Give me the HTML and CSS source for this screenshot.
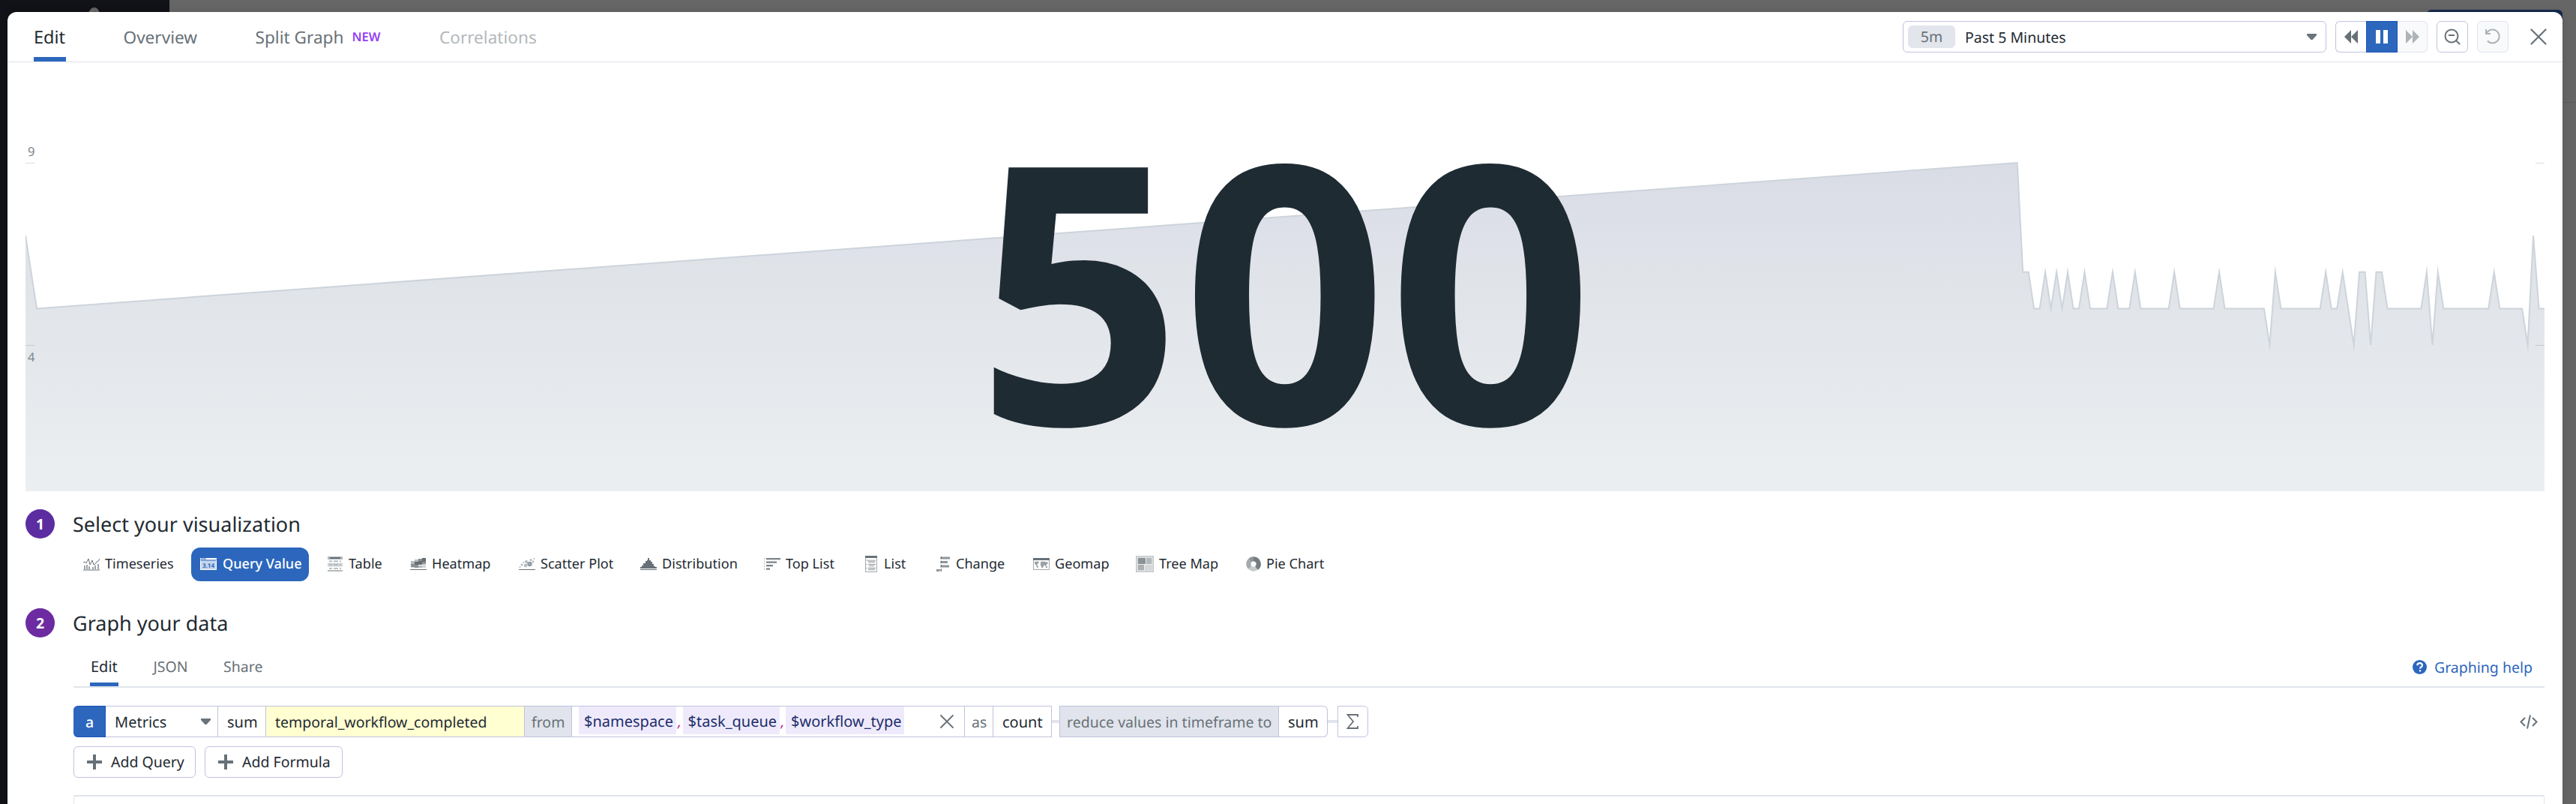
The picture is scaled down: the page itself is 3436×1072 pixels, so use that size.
FILE: index.html
```html
<!DOCTYPE html>
<html lang="en">
<head>
<meta charset="utf-8">
<title>Graph editor</title>
<link rel="stylesheet" href="styles.css">
</head>
<body>
<div class="backdrop">
  <div class="sidebar"><svg class="logo" width="20" height="10" viewBox="0 0 20 10"><path d="M1 10C3 3 6 0 10 0s6 4 8 10h-6l-2-6v6z" fill="#666"/></svg></div>
  <div class="behind"><div class="behind-button"></div><div class="behind-line"></div></div>
</div>
<main class="modal">
  <header class="header">
    <nav class="tabs">
      <a class="tab active">Edit</a>
      <a class="tab overview">Overview</a>
      <a class="tab">Split Graph<span class="new">NEW</span></a>
      <a class="tab disabled">Correlations</a>
    </nav>
    <div class="controls">
      <div class="range"><span class="pill">5m</span><span class="range-text">Past 5 Minutes</span><svg class="caret" width="13" height="8" viewBox="0 0 13 8"><path d="M0 0h13v2L7.500 8h-2L0 2z" fill="#6b747b"/></svg></div>
      <div class="playback">
        <span class="btn rewind"><svg width="18" height="18" viewBox="0 0 18 18" fill="#687178"><path d="M9 0v18L0 9zM18 0v18L9 9z"/></svg></span>
        <span class="btn on"><svg width="16" height="18" viewBox="0 0 16 18" fill="#fff"><path d="M0 0h6v18H0zM10 0h6v18h-6z"/></svg></span>
        <span class="btn off"><svg width="18" height="18" viewBox="0 0 18 18" fill="#adb3b7"><path d="M0 0v18l9-9zM9 0v18l9-9z"/></svg></span>
      </div>
      <span class="square"><svg width="22" height="22" viewBox="0 0 22 22" fill="none" stroke="#687178" stroke-width="2"><circle cx="10" cy="10" r="8.500"/><path d="M6 9h8M16 16l5 5"/></svg></span>
      <span class="square off"><svg width="22" height="22" viewBox="0 0 22 22" fill="none" stroke="#adb3b7" stroke-width="2"><path d="M2 1v6h6M2 7l1.500-2A9 9 0 1 1 4 16.500"/></svg></span>
      <svg class="close" width="22" height="22" viewBox="0 0 22 22" stroke="#687178" stroke-width="2.200" stroke-linecap="round"><path d="M1.500 1.500l19 19M20.500 1.500l-19 19"/></svg>
    </div>
  </header>

  <section class="chart">
    <svg class="plot" width="3360" height="572" viewBox="34 83 3360 572">
      <defs><linearGradient id="area" gradientUnits="userSpaceOnUse" x1="0" y1="217" x2="0" y2="654"><stop offset="0" stop-color="#d9dce5"/><stop offset=".28" stop-color="#dfe2ea"/><stop offset=".3" stop-color="#dfe2e7"/><stop offset="1" stop-color="#ebeff1"/></linearGradient></defs>
      <path id="fill" fill="url(#area)"/>
      <path id="line" fill="none" stroke="#cdd4db" stroke-width="2" stroke-miterlimit="10"/>
      <path d="M34 217.500h12M3382 217.500h12M34 460.500h12M3382 460.500h12" stroke="#000" stroke-opacity=".13"/>
      <text x="37" y="208" class="axis">9</text>
      <text x="37" y="482" class="axis">4</text>
    </svg>
    <div class="value">500</div>
  </section>

  <section class="step">
    <span class="num one">1</span>
    <h2>Select your visualization</h2>
  </section>
  <div class="viz">
    <span class="v"><svg width="22" height="17" viewBox="0 0 22 17"><path d="M0 6l2-1 2 2 3-6 2 8 3-6 2 6 2-1 2-3 2-1 2-3" fill="none" stroke="#687178"/><path d="M0 16h22" stroke="#687178"/><path d="M1 10h2v5H1zM4 9h2v6H4zM7 11h2v4H7zM12 12h2v3h-2zM15 10h2v5h-2zM19 8h2v7h-2z" fill="#9fa5a9"/></svg>Timeseries</span>
    <span class="v sel"><svg width="22" height="16" viewBox="0 0 22 16"><path d="M0 0h22v16H0z" fill="#c5d5ed"/><path d="M0 0h22v2.500H0z" fill="#fff"/><path d="M0 3h22" stroke="#2c67bd"/><path d="M1 1h7" stroke="#2c67bd"/><path d="M.5 3v12.500h21V3" stroke="#fff" fill="none"/><text x="11" y="12.500" text-anchor="middle" class="pi">3.14</text></svg>Query Value</span>
    <span class="v table"><svg width="20" height="20" viewBox="0 0 20 20"><path d="M0 0h20v4H0zM0 18h20v2H0z" fill="#b3b8bb"/><path d="M3 2h14" stroke="#687178" stroke-width="2"/><path d="M0 8.500h20v5H0z" fill="#d3d6d8"/><path d="M2 6.200h4m2 0h6m2 0h2M2 11h4m2 0h6m2 0h2M2 16h4m2 0h6m2 0h2" stroke="#a9afb3" stroke-width="1.400"/></svg>Table</span>
    <span class="v"><svg width="22" height="16" viewBox="0 0 22 16"><path d="M1 4h5v9H1zM16 8h5v5h-5z" fill="#d5d8da"/><path d="M1 4h5v4H1zM6 2h5v4H6zM11 10h5v3h-5z" fill="#b5babd"/><path d="M1 8h5v4H1zM6 9h5v4H6zM16 5h5v3h-5zM11 1h5v3h-5z" fill="#899094"/><path d="M6 5h5v4H6zM11 4h5v5h-5zM16 0h5v5h-5z" fill="#656d73"/><path d="M0 15.500h22" stroke="#687178"/></svg>Heatmap</span>
    <span class="v"><svg width="22" height="16" viewBox="0 0 22 16" fill="#b3b8bb"><circle cx="1.500" cy="12" r="1"/><circle cx="4" cy="9" r="1.500"/><circle cx="6" cy="6" r="1"/><circle cx="9" cy="10" r="2.200"/><circle cx="10" cy="5" r="2"/><circle cx="14.500" cy="8" r="3.300" fill="#999fa4"/><circle cx="16" cy="2.500" r="1.500"/><circle cx="19" cy="5" r="1.400"/><circle cx="20.500" cy="1" r="1"/><path d="M0 15.500h22" stroke="#687178"/></svg>Scatter Plot</span>
    <span class="v"><svg width="22" height="16" viewBox="0 0 22 16"><path d="M0 14v-2h2v-2h2V7h3V4h2V3h1V0h2v3h2v2h2v3h2v3h2v1h2v2z" fill="#687178"/><path d="M0 15.500h22" stroke="#687178"/></svg>Distribution</span>
    <span class="v"><svg width="22" height="16" viewBox="0 0 22 16"><path d="M3 1.200h19M3 5.700h14M3 10.200h9M3 14.700h5" stroke="#7c8489" stroke-width="2.200"/><path d="M.7 0v16" stroke="#9ea4a8" stroke-dasharray="1.500 2"/></svg>Top List</span>
    <span class="v list"><svg width="16" height="22" viewBox="0 0 16 22"><path d="M.5.500h15v21H.5z" fill="#fff" stroke="#a4aaae"/><path d="M0 0h16v3H0z" fill="#687178"/><path d="M3 6.500h11M4 8.500h9M4 16.500h10M4 18.500h9" stroke="#bfc3c5" stroke-width="1.800"/><path d="M4 11.500h10M5 13.500h7" stroke="#8c9398"/><path d="M1.500 6h1M1.500 11.500h1M1.500 16.500h1" stroke="#687178"/></svg>List</span>
    <span class="v"><svg width="19" height="22" viewBox="0 0 19 22"><path d="M5 3h13M5 8.500h10M5 14h12M0 19.500h7" stroke="#8f969a" stroke-width="3"/><path d="M5 1v20" stroke="#fff" stroke-dasharray="2 1"/><path d="M6.500 1v20" stroke="#687178" stroke-dasharray="3 2.500"/></svg>Change</span>
    <span class="v"><svg width="22" height="16" viewBox="0 0 22 16"><path d="M.5.500h21v15H.5z" fill="#fff" stroke="#a4aaae"/><path d="M0 0h22v3H0z" fill="#687178"/><path d="M2 5l5-.5 1 1.500-3 3 2 2-1 3-2-4-2-3zM10 5l3-.5 6 1 1 2-2 1-1 3-2-2-1 1-1 3-2-1-1-3zM17 11h2v2h-2z" fill="#9ba1a5"/></svg>Geomap</span>
    <span class="v"><svg width="24" height="22" viewBox="0 0 24 22"><path d="M0 0h24v22H0z" fill="#c4c8ca"/><path d="M3 3h10v8H3z" fill="#8b9297"/><path d="M14 3h7v8h-7z" fill="#b3b8bb"/><path d="M3 12h8v7H3z" fill="#a9afb2"/><path d="M12 12h9v7h-9z" fill="#d5d7d9"/><path d="M2 11.500h20M13.500 2v9.500M11.500 11.500V20M2 2h20v18H2z" fill="none" stroke="#eceeee"/></svg>Tree Map</span>
    <span class="v"><svg width="20" height="20" viewBox="0 0 20 20" fill="none" stroke-width="6"><circle cx="10" cy="10" r="6.700" stroke="#c7cacc"/><path d="M10 3.300A6.700 6.700 0 0 1 14 15.400" stroke="#757d82"/><path d="M5 14.500A6.700 6.700 0 0 1 5.500 5" stroke="#a4aaae"/><path d="M5.500 5A6.700 6.700 0 0 1 10 3.300" stroke="#8e9599"/></svg>Pie Chart</span>
  </div>

  <section class="step second">
    <span class="num two">2</span>
    <h2>Graph your data</h2>
  </section>
  <div class="data">
    <div class="subtabs">
      <a class="sub active">Edit</a><a class="sub">JSON</a><a class="sub">Share</a>
      <a class="help"><svg width="19" height="19" viewBox="0 0 19 19"><circle cx="9.500" cy="9.500" r="9.500" fill="#2c67bd"/><path d="M6.300 7.200c.2-4 6.700-3.900 6.700-.2 0 2.300-3 2.200-3 4.400M10 13.200v2.300" fill="none" stroke="#fff" stroke-width="2.200"/></svg>Graphing help</a>
    </div>
    <div class="query">
      <span class="cell letter">a</span>
      <span class="cell metrics">Metrics<svg width="13" height="8" viewBox="0 0 13 8"><path d="M0 0h13v2L7.500 8h-2L0 2z" fill="#6b747b"/></svg></span>
      <span class="cell agg">sum</span>
      <span class="cell name">temporal_workflow_completed</span>
      <span class="cell from">from</span>
      <span class="cell scope"><b class="tag ns">$namespace</b><i>,</i><b class="tag tq">$task_queue</b><i>,</i><b class="tag wt">$workflow_type</b><svg width="18" height="18" viewBox="0 0 18 18" stroke="#687178" stroke-width="1.800" stroke-linecap="round"><path d="M1 1l16 16M17 1L1 17"/></svg></span>
      <span class="cell as">as</span>
      <span class="cell count">count</span>
      <span class="link l1"></span>
      <span class="cell reduce">reduce values in timeframe to</span>
      <span class="cell sum2">sum</span>
      <span class="link l2"></span>
      <span class="cell sigma"><svg width="16" height="20" viewBox="0 0 16 20" fill="none" stroke="#687178" stroke-width="1.800"><path d="M15 4V1H1.500L9 10 1.500 19H15v-3"/></svg></span>
      <svg class="code" width="24" height="19" viewBox="0 0 24 19" fill="none" stroke="#687178" stroke-width="2"><path d="M7 4L1.500 9.500 7 15M17 4l5.500 5.500L17 15M14 .5l-4 18"/></svg>
    </div>
    <div class="adds">
      <span class="add q"><svg width="20" height="20" viewBox="0 0 20 20" stroke="#687178" stroke-width="4"><path d="M10 0v20M0 10h20"/></svg>Add Query</span>
      <span class="add f"><svg width="20" height="20" viewBox="0 0 20 20" stroke="#687178" stroke-width="4"><path d="M10 0v20M0 10h20"/></svg>Add Formula</span>
    </div>
    <div class="panel"></div>
  </div>
</main>
<script src="chart.js"></script>
</body>
</html>
```
FILE: chart.js
```js
// Each pair is [sample index, value]; samples after the gap are 7.482px apart.
const samples = [[0,9],[1,6],[2,6],[3,5],[4,5],[5,6],[6,5],[7,6],[8,5],[9,6],[10,5],[11,5],[12,6],[13,5],[16,5],[17,6],[18,5],[20,5],[21,6],[22,5],[27,5],[28,6],[29,5],[35,5],[36,6],[37,5],[44,5],[45,4],[46,6],[47,5],[54,5],[55,6],[56,5],[57,5],[58,6],[60,4],[61,6],[62,6],[63,4],[64,6],[65,6],[66,5],[72,5],[73,6],[74,4],[75,6],[76,5],[84,5],[85,6],[86,5],[90,5],[91,4],[92,7],[93,5],[94,5]];
const y = v => (654.4 - v * 48.6).toFixed(1);
const points = [[34, y(7)], [49, y(5)]].concat(samples.map(([k, v]) => [(2690.7 + k * 7.482).toFixed(1), y(v)]));
const line = 'M' + points.map(p => p.join(' ')).join('L');
document.getElementById('line').setAttribute('d', line);
document.getElementById('fill').setAttribute('d', line + 'V655H34Z');
```
FILE: styles.css
```css
* { box-sizing: border-box; }
body { margin: 0; width: 3436px; height: 1072px; overflow: hidden; position: relative; font-family: "Noto Sans", sans-serif; font-size: 19.5px; text-rendering: geometricPrecision; color: #1f2b33; background: #666; }
svg { flex: none; display: block; }
.backdrop { position: absolute; inset: 0; display: flex; }
.sidebar { width: 226px; background: #111217; padding: 10px 0 0 116px; }
.behind { flex: 1; position: relative; }
.behind-button { position: absolute; right: 18px; top: 13px; width: 181px; height: 40px; border-radius: 6px; background: #14294d; }
.behind-line { position: absolute; right: 0; top: 136px; width: 18px; height: 1px; background: #5a5a5a; }
.modal { position: absolute; left: 10px; top: 16px; width: 3408px; height: 1080px; background: #fff; border-radius: 12px; box-shadow: 0 0 12px rgba(0,0,0,.12); }

.header { height: 67px; border-bottom: 1px solid #e0e2ec; display: flex; justify-content: space-between; padding-left: 35px; }
.tabs { display: flex; gap: 77.5px; font-size: 22.6px; color: #687178; }
.tab { height: 66px; line-height: 67px; border-bottom: 6px solid transparent; white-space: nowrap; }
.tab.active { width: 43px; font-size: 23.5px; color: #1f2b33; border-color: #2c67bd; }
.tab.overview { margin-left: -1px; }
.tab.disabled { margin-left: 1px; color: #b3b8bb; }
.new { font-size: 16.5px; font-weight: 600; color: #9540f5; margin-left: 11px; position: relative; top: -3px; }
.controls { display: flex; align-items: flex-start; padding: 12px 21px 0 0; }
.range { width: 565px; height: 42px; border: 1px solid #c0c3dc; border-radius: 6px; display: flex; align-items: center; padding: 0 12px 0 6px; }
.pill { width: 63px; height: 30px; background: #e2e5ec; border-radius: 6px; text-align: center; line-height: 29px; color: #687178; }
.range-text { flex: 1; padding-left: 13px; }
.playback { display: flex; margin-left: 12px; width: 123px; height: 42px; }
.btn { width: 41px; display: flex; align-items: center; justify-content: center; border: 1px solid #c0c3dc; border-right: 0; border-radius: 6px 0 0 6px; }
.btn.rewind { padding-right: 1px; }
.btn.on { width: 42px; background: #2c67bd; border: 1px solid #1d52b5; border-radius: 0; }
.btn.off { width: 40px; background: #f9fafc; border: 1px solid #e2e4ee; border-left: 0; border-radius: 0 6px 6px 0; }
.square { margin-left: 12px; width: 42px; height: 42px; border: 1px solid #c0c3dc; border-radius: 6px; display: flex; align-items: center; justify-content: center; }
.square.off { background: #f9fafc; border-color: #e2e4ee; }
.close { margin: 10px 0 0 29px; }

.chart { height: 572px; margin: 0 24px; display: grid; }
.plot, .value { grid-area: 1 / 1; }
.axis { font-size: 16.5px; fill: #80878c; }
.value { z-index: 1; justify-self: center; font-size: 480px; font-weight: 700; line-height: 572px; height: 572px; margin-top: 11px; }

.step { display: flex; align-items: center; gap: 24px; height: 39px; margin: 24px 0 0 24px; }
.num { width: 39px; height: 39px; border-radius: 50%; color: #fff; font-weight: 700; text-align: center; line-height: 39px; }
.one { background: #5c2da0; }
.two { background: #6c2ba0; }
h2 { margin: 0; font-size: 27px; font-weight: 400; line-height: 38px; }
.viz { display: grid; grid-template-columns: 156px 170px 110px 145px 162px 165px 135px 95px 129px 137px 147px 140px; height: 45px; margin: 12px 0 0 89px; font-size: 18.1px; }
.v { justify-self: start; display: flex; align-items: center; gap: 7px; padding: 0 12px 1px; border-radius: 12px; white-space: nowrap; }
.v.sel { background: #2c67bd; color: #fff; font-weight: 500; width: 157px; gap: 8px; }
.v.table { gap: 8px; }
.v.list { gap: 9px; }
.pi { font-size: 8px; font-weight: 700; fill: #2c67bd; }
.second { margin-top: 36px; }

.data { margin: 0 24px 0 88px; }
.subtabs { display: flex; gap: 45.5px; height: 67px; padding: 18px 16px 0 22px; border-bottom: 2px solid #e1e5eb; color: #687178; }
.sub { height: 47px; line-height: 41px; border-bottom: 5px solid transparent; padding: 0 1px; }
.sub.active { width: 38px; font-size: 20px; color: #1f2b33; border-color: #2c67bd; }
.help { margin-left: auto; height: 42px; display: flex; align-items: center; gap: 10px; color: #2c67bd; }
.query { display: flex; margin-top: 24px; height: 42px; position: relative; align-items: center; }
.cell { height: 42px; border: 1px solid #c0c3dc; border-left: 0; display: flex; align-items: center; padding-left: 12px; white-space: nowrap; flex: none; }
.letter { width: 43px; background: #2c67bd; border-color: #1d52b5; color: #fff; border-radius: 6px 0 0 6px; padding-left: 16px; font-weight: 500; }
.metrics { width: 150px; justify-content: space-between; padding-right: 9px; font-size: 20px; }
.agg { width: 64px; font-size: 20px; }
.name { width: 345px; background: #ffffd1; }
.from { width: 63px; background: #e1e4ec; color: #687178; padding-left: 9px; }
.scope { width: 524px; align-items: flex-start; padding-left: 9px; font-size: 20px; }
.scope svg { margin: 11px 0 0 48px; }
.tag { background: #efeafb; color: #1c2f6b; font-weight: 400; height: 37px; line-height: 40px; padding-left: 7px; }
.ns { width: 130px; }
.tq { width: 129px; }
.wt { width: 158px; }
.scope i { width: 8.500px; color: #c4289b; line-height: 40px; padding-left: 2px; }
.as { width: 38px; color: #687178; padding-left: 9px; }
.count { width: 78px; font-size: 20px; }
.link { height: 4px; background: #e1e4ec; }
.l1 { width: 10px; }
.l2 { width: 13px; }
.reduce { width: 293px; background: #e1e4ec; color: #687178; padding-left: 9px; border-left: 1px solid #c0c3dc; }
.sum2 { width: 65px; border-radius: 0 6px 6px 0; font-size: 20px; }
.sigma { width: 41px; border-left: 1px solid #c0c3dc; border-radius: 0 6px 6px 0; padding-left: 11px; }
.code { margin-left: auto; margin-right: 9px; }
.adds { display: flex; gap: 12px; margin-top: 12px; }
.add { height: 42px; border: 1px solid #c0c3dc; border-radius: 6px; display: flex; align-items: center; gap: 12px; padding: 0 0 1px 17px; white-space: nowrap; }
.q { width: 163px; }
.f { width: 184px; }
.panel { margin-top: 23px; height: 60px; border: 1px solid #e1e5eb; border-top-width: 2px; border-radius: 2px; }
```
